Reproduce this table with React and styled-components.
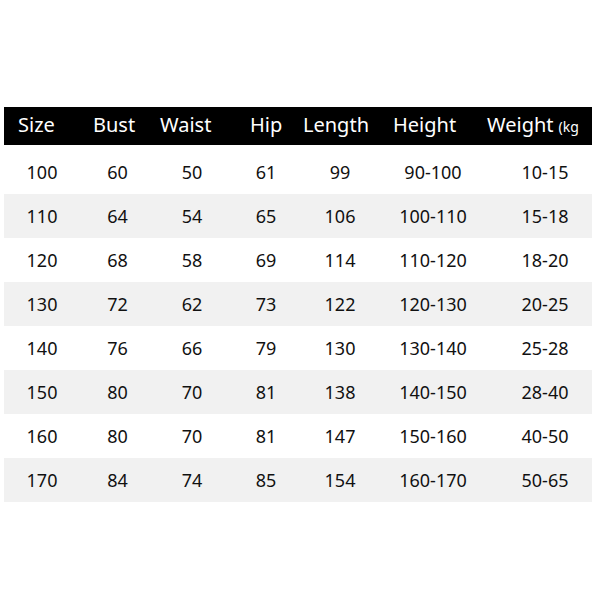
import React from "react";
import styled, { createGlobalStyle } from "styled-components";

const Global = createGlobalStyle`
  html, body { margin: 0; padding: 0; background: #ffffff; }
  body { font-family: "Noto Sans", "Open Sans", sans-serif; }
`;

const Page = styled.div`
  width: 600px;
  height: 600px;
  padding: 107px 8px 0 4px;
  box-sizing: border-box;
`;

const Table = styled.div`
  display: flex;
  flex-direction: column;
  width: 588px;
`;

const HeaderRow = styled.div`
  display: grid;
  grid-template-columns: 75px 67px 90px 53px 90px 94px 1fr;
  align-items: center;
  height: 38px;
  padding-left: 14px;
  background: #000;
  color: #fff;
  font-size: 20px;
  line-height: 1;
  box-sizing: border-box;
`;

const HeadCell = styled.div`
  white-space: nowrap;
  margin-top: -2px;
`;

const Unit = styled.span`
  font-size: 14px;
  margin-left: 5px;
`;

const Body = styled.div`
  display: flex;
  flex-direction: column;
  padding-top: 5px;
`;

const Row = styled.div`
  display: grid;
  grid-template-columns: 76px 75px 74px 74px 74px 112px 1fr;
  align-items: center;
  height: 44px;
  background: ${(p) => (p.$shaded ? "#f1f1f1" : "#fff")};
  color: #111;
  font-size: 18px;
`;

const Cell = styled.div`
  text-align: center;
  padding-left: ${(p) => (p.$last ? "9px" : "0")};
`;

const headers = ["Size", "Bust", "Waist", "Hip", "Length", "Height"];

const rows = [
  ["100", "60", "50", "61", "99", "90-100", "10-15"],
  ["110", "64", "54", "65", "106", "100-110", "15-18"],
  ["120", "68", "58", "69", "114", "110-120", "18-20"],
  ["130", "72", "62", "73", "122", "120-130", "20-25"],
  ["140", "76", "66", "79", "130", "130-140", "25-28"],
  ["150", "80", "70", "81", "138", "140-150", "28-40"],
  ["160", "80", "70", "81", "147", "150-160", "40-50"],
  ["170", "84", "74", "85", "154", "160-170", "50-65"],
];

export default function App() {
  return (
    <>
      <Global />
      <Page>
        <Table>
          <HeaderRow>
            {headers.map((h) => (
              <HeadCell key={h}>{h}</HeadCell>
            ))}
            <HeadCell>
              Weight<Unit>(kg</Unit>
            </HeadCell>
          </HeaderRow>
          <Body>
            {rows.map((r, i) => (
              <Row key={r[0]} $shaded={i % 2 === 1}>
                {r.map((v, j) => (
                  <Cell key={j} $last={j === r.length - 1}>
                    {v}
                  </Cell>
                ))}
              </Row>
            ))}
          </Body>
        </Table>
      </Page>
    </>
  );
}
